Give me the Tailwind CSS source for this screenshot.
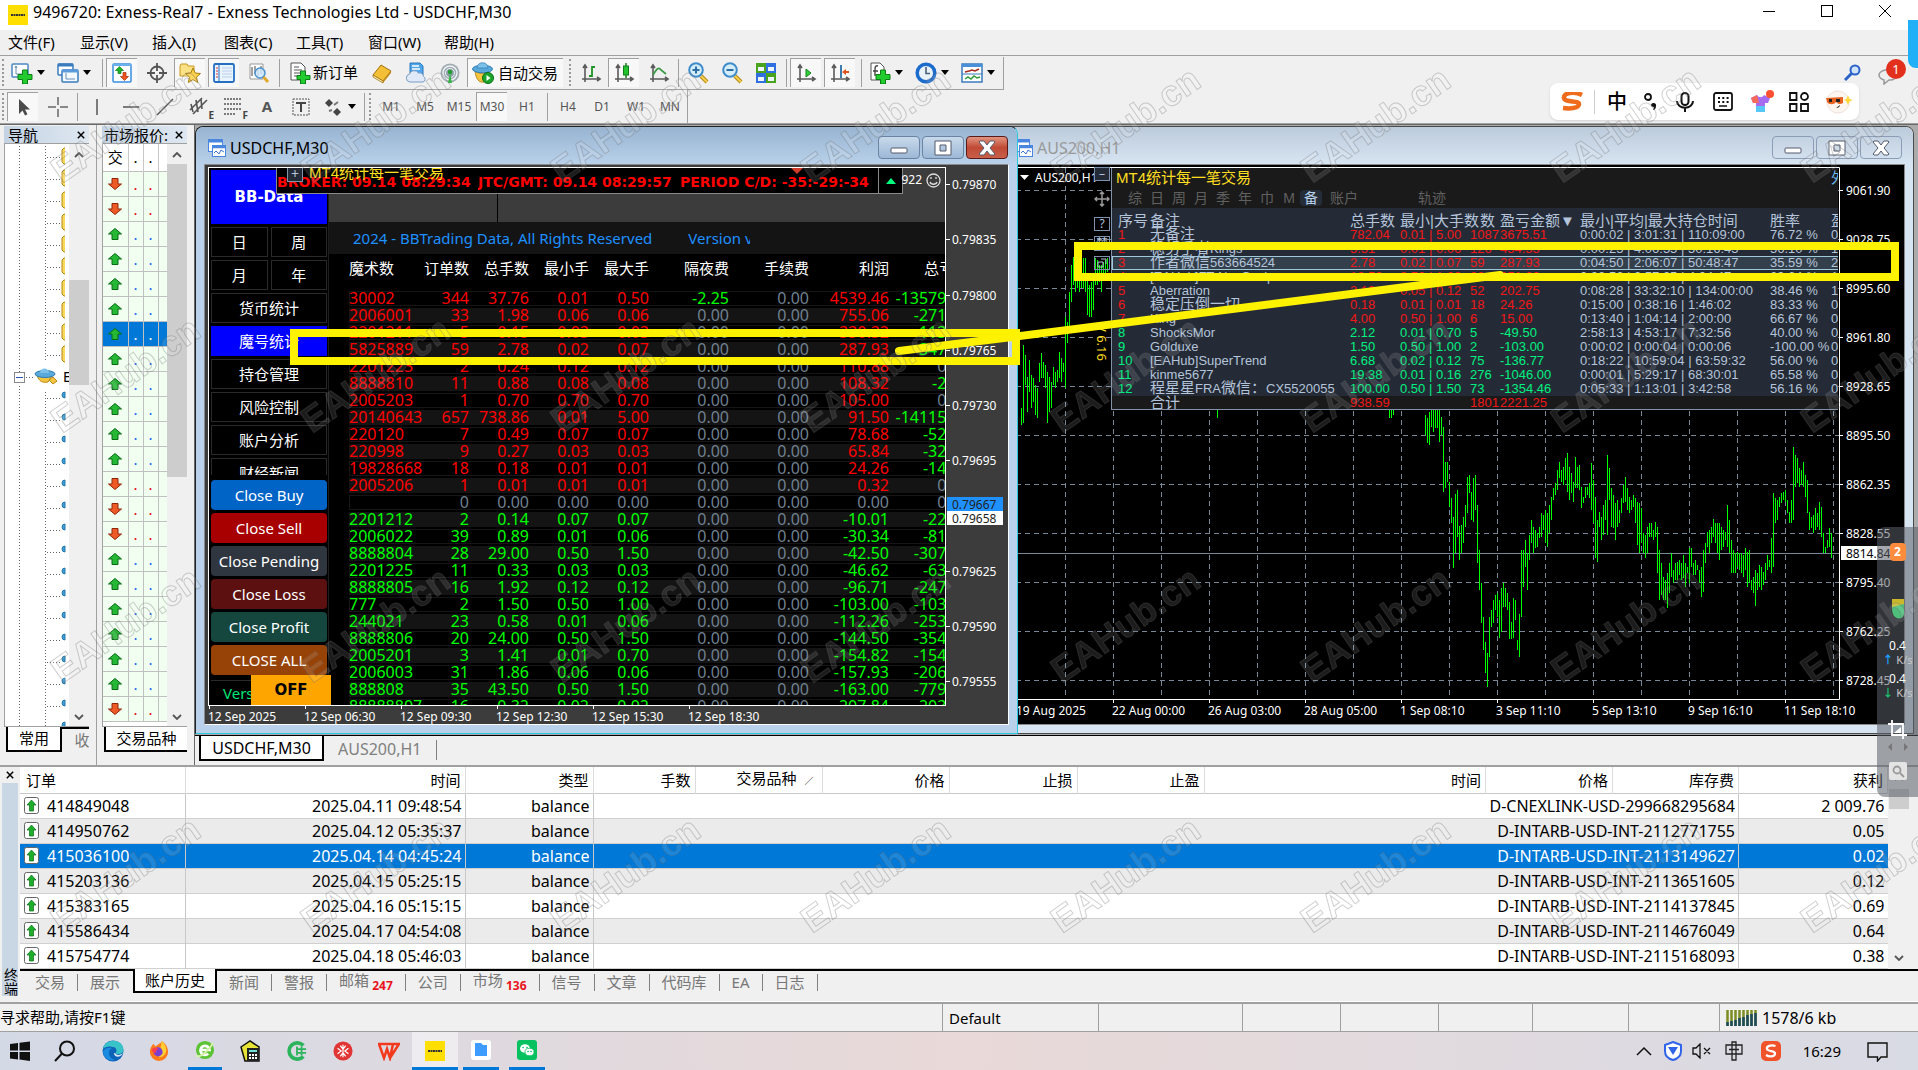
<!DOCTYPE html>
<html lang="zh-CN">
<head>
  <meta charset="UTF-8" />
  <meta name="viewport" content="width=device-width, initial-scale=1.0"/>
  <title>9496720: Exness-Real7 - Exness Technologies Ltd - USDCHF,M30</title>
  <script src="https://cdn.jsdelivr.net/npm/@tailwindcss/browser@4"></script>
</head>
<body class="relative h-screen overflow-hidden flex flex-col bg-[#f0f0f0] text-black text-[15px] font-['Noto_Sans','Noto_Sans_CJK_SC',sans-serif]">

  <!-- Icon sprite -->
  <svg class="hidden" aria-hidden="true">
    <symbol id="caret" viewBox="0 0 8 5"><path d="M0 0h8L4 5z" fill="#000"/></symbol>
    <symbol id="i-newchart" viewBox="0 0 22 22"><rect x="1" y="2" width="16" height="13" rx="1" fill="#fff" stroke="#4b86c2" stroke-width="1.5"/><path d="M5 4v8h9M4 6l1-2 1 2M12 11l2 1-2 1" fill="none" stroke="#6b8fb5"/><path d="M11.500 8h5v4.500H21v5h-4.500V22h-5v-4.500H7v-5h4.500z" fill="#22cc2e" stroke="#0d7d17"/></symbol>
    <symbol id="i-profiles" viewBox="0 0 22 22"><rect x="1" y="2" width="15" height="11" rx="1" fill="#fff" stroke="#3a7bbd" stroke-width="1.500"/><path d="M1 3h15" stroke="#3a7bbd" stroke-width="3"/><rect x="5" y="8" width="16" height="12" rx="1" fill="#f3f9ff" stroke="#3a7bbd" stroke-width="1.500"/><path d="M5 9h16" stroke="#5b9bdb" stroke-width="3"/><path d="M9 11v6h9" fill="none" stroke="#6b8fb5"/></symbol>
    <symbol id="i-market" viewBox="0 0 22 22"><rect x="2" y="2" width="18" height="18" rx="1" fill="#fff" stroke="#3a8de0" stroke-width="1.500"/><path d="M2 3h18" stroke="#6ab1ee" stroke-width="2"/><path d="M8.500 4.500l4 4H10v3H7v-3H4.500z" fill="#1db528" stroke="#0c7a16" stroke-width=".7"/><path d="M13.500 18.500l-4-4H12v-4h3v4h2.500z" fill="#f0551f" stroke="#a62c08" stroke-width=".7"/></symbol>
    <symbol id="i-target" viewBox="0 0 22 22"><circle cx="11" cy="11" r="6.500" fill="none" stroke="#555" stroke-width="1.800"/><path d="M11 1v8M11 13v8M1 11h8M13 11h8" stroke="#555" stroke-width="1.800"/></symbol>
    <symbol id="i-nav" viewBox="0 0 22 22"><path d="M1 4l1-2h6l1 2h6v10H1z" fill="#fbe186" stroke="#c8981d"/><path d="M14 6l2.200 5 5.300.5-4 3.600 1.200 5.400L14 17.600 9.300 20.500l1.200-5.400-4-3.600 5.300-.5z" fill="#fbd04a" stroke="#a97f10"/></symbol>
    <symbol id="i-terminal" viewBox="0 0 22 22"><rect x="1" y="2" width="20" height="18" rx="1.500" fill="#eaf4ff" stroke="#246fc0" stroke-width="1.800"/><path d="M6 3v16" stroke="#246fc0"/><path d="M9 6h10M9 9h10M9 12h10M9 15h10" stroke="#b9cfe6"/><path d="M3 6h2M3 9h2M3 12h2M3 15h2" stroke="#d33"/></symbol>
    <symbol id="i-tester" viewBox="0 0 22 22"><path d="M2 2h13v15H2z" fill="#fff" stroke="#999"/><path d="M4 5v9M7 4v8M10 6v8M13 4v8" stroke="#444"/><circle cx="12" cy="11" r="5" fill="#cfe9fb" fill-opacity=".85" stroke="#4b93cf" stroke-width="1.500"/><path d="M15.500 15l4.500 5" stroke="#e0a92a" stroke-width="3"/></symbol>
    <symbol id="i-order" viewBox="0 0 22 22"><path d="M2 1h10l4 4v13H2z" fill="#fff" stroke="#555"/><path d="M5 5h5M5 8h8M5 11h6M5 14h4" stroke="#555"/><path d="M11.500 9h5v4.500H21v4h-4.500V22h-5v-4.500H8v-4h3.500z" fill="#22cc2e" stroke="#0d7d17"/></symbol>
    <symbol id="i-editor" viewBox="0 0 22 22"><path d="M2 13l8-10 10 6-8 10z" fill="#f2bf37" stroke="#a0720c"/><path d="M2 13l10 6v2L2 15z" fill="#fff3c0" stroke="#a0720c" stroke-width=".8"/><path d="M12 19l8-10v2l-8 10z" fill="#c28a15"/></symbol>
    <symbol id="i-cloud" viewBox="0 0 22 22"><path d="M5 1h10l3 3v9H5z" fill="#4fa6ea" stroke="#2a77bb"/><path d="M7 4h7M7 7h8" stroke="#fff" stroke-width="1.500"/><path d="M5 20a4 4 0 01-.5-7.900 5 5 0 019-1.100 4 4 0 015 3.500A3 3 0 0118 20z" fill="#dfe9f7" stroke="#7d9cc4"/></symbol>
    <symbol id="i-signal" viewBox="0 0 22 22"><circle cx="11" cy="11" r="9.500" fill="#9faab1"/><circle cx="11" cy="11" r="7" fill="none" stroke="#eef3f5" stroke-width="1.500"/><circle cx="11" cy="11" r="4.500" fill="#8da0aa" stroke="#eef3f5"/><circle cx="11" cy="10" r="2.200" fill="#1f9d2c"/><path d="M11 11l2 10h-4z" fill="#35b543"/></symbol>
    <symbol id="i-auto" viewBox="0 0 22 22"><path d="M3 9c1 8 4 12 9 11l5-10c-5 2-10 2-14-1z" fill="#f5c542" stroke="#b98a13"/><ellipse cx="10.500" cy="7" rx="10" ry="3.800" fill="#5aa9dc" stroke="#2e7bb0"/><path d="M5 6c0-7 11-7 11 0z" fill="#7cc1ea" stroke="#2e7bb0" stroke-width=".7"/><circle cx="16" cy="16" r="5.500" fill="#19a52a" stroke="#0c6f18"/><path d="M14.500 13l4 3-4 3z" fill="#fff"/></symbol>
    <symbol id="i-axes" viewBox="0 0 22 22"><path d="M5 3v17M2 17h18M3 6l2-3 2 3M17 15l3 2-3 2" fill="none" stroke="#5a5a5a" stroke-width="1.600"/></symbol>
    <symbol id="i-bars" viewBox="0 0 22 22"><use href="#i-axes"/><path d="M12 4v11M12 5h3M9 14h3" stroke="#1c9426" stroke-width="1.800" fill="none"/></symbol>
    <symbol id="i-candle" viewBox="0 0 22 22"><use href="#i-axes"/><path d="M13 1v15" stroke="#1c7a20" stroke-width="1.500"/><rect x="10.500" y="4" width="5" height="9" fill="#22c32d" stroke="#117d1a"/></symbol>
    <symbol id="i-line" viewBox="0 0 22 22"><use href="#i-axes"/><path d="M5 13c4-7 6-8 8-5l5 4" stroke="#3c9b46" stroke-width="1.800" fill="none"/></symbol>
    <symbol id="i-zoomin" viewBox="0 0 22 22"><path d="M14 14l6 6" stroke="#b98a13" stroke-width="4"/><path d="M14 14l6 6" stroke="#f5d04e" stroke-width="2"/><circle cx="9" cy="8" r="6.800" fill="#d6eefb" stroke="#3f8ccb" stroke-width="2"/><path d="M9 4.500v7M5.500 8h7" stroke="#2b6ea8" stroke-width="2"/></symbol>
    <symbol id="i-zoomout" viewBox="0 0 22 22"><path d="M14 14l6 6" stroke="#b98a13" stroke-width="4"/><path d="M14 14l6 6" stroke="#f5d04e" stroke-width="2"/><circle cx="9" cy="8" r="6.800" fill="#d6eefb" stroke="#3f8ccb" stroke-width="2"/><path d="M5.500 8h7" stroke="#2b6ea8" stroke-width="2"/></symbol>
    <symbol id="i-tile" viewBox="0 0 22 22"><path d="M1 1h10v10H1z" fill="#4aa31c"/><path d="M11 1h10v10H11z" fill="#2f6fe0"/><path d="M1 11h10v10H1z" fill="#2f6fe0"/><path d="M11 11h10v10H11z" fill="#4aa31c"/><path d="M3 5h6v4H3zM13 5h6v4h-6zM3 15h6v4H3zM13 15h6v4h-6z" fill="#eef6ff"/></symbol>
    <symbol id="i-scroll" viewBox="0 0 22 22"><use href="#i-axes"/><path d="M11 7l5 4-5 4z" fill="#2fd03a" stroke="#12851c"/></symbol>
    <symbol id="i-shift" viewBox="0 0 22 22"><use href="#i-axes"/><path d="M12 3v13" stroke="#2a6ea5" stroke-width="1.800"/><path d="M13 10l4-3v2h3v2h-3v2z" fill="#e2521b"/></symbol>
    <symbol id="i-indicator" viewBox="0 0 22 22"><path d="M2 1h9l4 4v13H2z" fill="#fff" stroke="#555"/><path d="M9 4c-3-1-3 2-3 4v6M4 9h5" fill="none" stroke="#444" stroke-width="1.400"/><path d="M11.500 8h5v4.500H21v5h-4.500V22h-5v-4.500H7v-5h4.500z" fill="#22cc2e" stroke="#0d7d17"/></symbol>
    <symbol id="i-clock" viewBox="0 0 22 22"><circle cx="11" cy="11" r="8.800" fill="#e9f2fb" stroke="#1c6ccc" stroke-width="3.500"/><path d="M11 5v6.500h4" fill="none" stroke="#4a6078" stroke-width="1.600"/></symbol>
    <symbol id="i-template" viewBox="0 0 22 22"><rect x="1" y="2" width="20" height="18" fill="#fff" stroke="#3a7bbd" stroke-width="1.500"/><path d="M1 3.500h20" stroke="#4a90d8" stroke-width="3"/><path d="M1 12h20" stroke="#3a7bbd"/><path d="M4 10l4-1 3-1 3 1 4-2" fill="none" stroke="#a52a1a" stroke-width="1.500"/><path d="M4 17l3-2 3 2 3-3 3 2 3-1" fill="none" stroke="#2f9b3a" stroke-width="1.500"/></symbol>
    <symbol id="i-cursor" viewBox="0 0 22 22"><path d="M7 3v15l3.500-3.500 2.500 5 2.500-1.200-2.500-4.800h5z" fill="#4a4a4a"/></symbol>
    <symbol id="i-cross" viewBox="0 0 22 22"><path d="M11 1v8M11 13v8M1 11h8M13 11h8" stroke="#666" stroke-width="1.500"/></symbol>
    <symbol id="i-vline" viewBox="0 0 22 22"><path d="M11 3v16" stroke="#555" stroke-width="1.500"/></symbol>
    <symbol id="i-hline" viewBox="0 0 22 22"><path d="M3 11h16" stroke="#555" stroke-width="1.500"/></symbol>
    <symbol id="i-trend" viewBox="0 0 22 22"><path d="M3 19L19 3" stroke="#555" stroke-width="1.500"/></symbol>
    <symbol id="i-channel" viewBox="0 0 22 22"><path d="M2 14L14 2M5 18L19 4M3 8l2 8M8 4l2 12M13 3l1 10" stroke="#555" stroke-width="1.600"/></symbol>
    <symbol id="i-fibo" viewBox="0 0 22 22"><path d="M2 3h18M2 8h18M2 13h18M2 18h11" stroke="#555" stroke-width="1.400" stroke-dasharray="2 1"/></symbol>
    <symbol id="i-label" viewBox="0 0 22 22"><rect x="3" y="3" width="16" height="16" fill="none" stroke="#555" stroke-dasharray="2 1"/><path d="M6 7h10M11 7v9" stroke="#444" stroke-width="2"/></symbol>
    <symbol id="i-arrows" viewBox="0 0 22 22"><path d="M7 3l4 4-4 4-4-4zM15 12l4 4-4 4-4-4z" fill="#444"/><path d="M7 15l3-1M12 9l4-3" stroke="#777" stroke-width="2"/></symbol>
    <symbol id="i-up" viewBox="0 0 14 12"><path d="M7 .5L13.500 6H10v5.500H4V6H.5z" fill="#25b834" stroke="#0a6b16"/></symbol>
    <symbol id="i-down" viewBox="0 0 14 12"><path d="M7 11.500L13.500 6H10V.5H4V6H.5z" fill="#ee5a26" stroke="#8f2608"/></symbol>
    <symbol id="i-chartwin" viewBox="0 0 18 18"><rect x=".5" y=".5" width="14" height="12" fill="#fff" stroke="#4a86e0"/><path d="M1 2h14" stroke="#4a86e0" stroke-width="3"/><rect x="4.500" y="6.500" width="13" height="11" fill="#fff" stroke="#4a86e0"/><path d="M4 8h14" stroke="#4a86e0" stroke-width="2.500"/><path d="M6 14l2-2 3 3 2-4 3 2" fill="none" stroke="#3575d8"/></symbol>
    <symbol id="i-min" viewBox="0 0 18 18"><rect x="1" y="9" width="16" height="5" rx="1" fill="#fff" stroke="#555b6b"/></symbol>
    <symbol id="i-max" viewBox="0 0 18 18"><path fill-rule="evenodd" d="M1 2h16v14H1zM6 6v6h6V6z" fill="#fff" stroke="#555b6b"/></symbol>
    <symbol id="i-x" viewBox="0 0 18 18"><path d="M2 2h4l3 4 3-4h4l1 1-5 6 5 6-1 1h-4l-3-4-3 4H2l-1-1 5-6-5-6z" fill="#fff" stroke="#555b6b"/></symbol>
    <symbol id="i-close" viewBox="0 0 10 10"><path d="M1 1l8 8M9 1L1 9" stroke="#000" stroke-width="1.800"/></symbol>
    <symbol id="i-chev-up" viewBox="0 0 10 6"><path d="M1 5l4-4 4 4" fill="none" stroke="#555" stroke-width="1.800"/></symbol>
    <symbol id="i-chev-down" viewBox="0 0 10 6"><path d="M1 1l4 4 4-4" fill="none" stroke="#555" stroke-width="1.800"/></symbol>
  </svg>

  <!-- Title bar -->
  <header class="h-[30px] shrink-0 bg-white flex items-center pl-2 pr-[27px]">
    <svg class="w-5 h-5" viewBox="0 0 20 20"><rect width="20" height="20" fill="#ffde02"/><path d="M3 10h14" stroke="#333" stroke-width="2" stroke-dasharray="2 .5"/></svg>
    <h1 class="ml-[5px] -mt-1.5 text-[16px]">9496720: Exness-Real7 - Exness Technologies Ltd - USDCHF,M30</h1>
    <div class="ml-auto flex -mt-2 gap-[46px]">
      <button aria-label="最小化"><svg class="w-3 h-3" viewBox="0 0 12 12"><path d="M0 6.500h12" stroke="#000"/></svg></button>
      <button aria-label="最大化"><svg class="w-3 h-3" viewBox="0 0 12 12"><rect x=".5" y=".5" width="11" height="11" fill="none" stroke="#000"/></svg></button>
      <button aria-label="关闭"><svg class="w-3 h-3" viewBox="0 0 12 12"><path d="M0 0l12 12M12 0L0 12" stroke="#000"/></svg></button>
    </div>
  </header>

  <!-- Menu -->
  <nav id="menu" class="h-[26px] shrink-0 flex items-center gap-[23px] pl-2 border-b border-[#a0a0a0]"></nav>

  <!-- Toolbars -->
  <div class="h-[34px] shrink-0 flex items-center">
    <div id="toolbar1" class="h-[33px] flex items-center border-r border-b border-[#a0a0a0]"></div>
    <div class="ml-auto mr-3 flex items-center gap-4">
      <button aria-label="搜索"><svg class="w-[18px] h-[18px]" viewBox="0 0 18 18"><circle cx="11" cy="6" r="4.500" fill="#cfe3fb" stroke="#2a62c8" stroke-width="2"/><path d="M7.500 9.500L1 16" stroke="#2a62c8" stroke-width="3"/></svg></button>
      <button class="relative w-7 h-6" aria-label="消息">
        <svg class="w-5 h-4 mt-2" viewBox="0 0 20 16"><path d="M8 1h4c4 0 6 2 6 5s-2 5-6 5h-1l-5 4v-4c-3-1-5-3-5-5s3-5 7-5z" fill="#eee" stroke="#999" stroke-width="1.500"/></svg>
        <span class="absolute -top-0.5 right-0 w-5 h-5 rounded-full bg-[#e2301c] text-white text-[13px] leading-5">1</span>
      </button>
    </div>
  </div>
  <div class="h-[34px] shrink-0 border-b border-[#a0a0a0]">
    <div id="toolbar2" class="h-[33px] w-fit flex items-center border-r border-[#a0a0a0]"></div>
  </div>

  <!-- Main area -->
  <main class="flex-1 min-h-0 flex border-t border-[#696969]">
    <!-- Navigator -->
    <section class="w-[97px] shrink-0 pl-1 pr-[7px] pt-px flex flex-col border-r border-[#a0a0a0]">
      <div class="h-[17px] flex items-center justify-between pl-1 pr-1 bg-gradient-to-r from-[#c3d3e3] to-[#dfe8f1] leading-4">
        <h2>导航</h2><button aria-label="关闭导航"><svg class="w-2 h-2"><use href="#i-close"/></svg></button>
      </div>
      <div class="flex-1 min-h-0 flex border border-[#a0a0a0] border-r-0 bg-white">
        <svg id="navTree" class="flex-1 h-full overflow-hidden"></svg>
        <div class="w-5 bg-[#f0f0f0] flex flex-col items-center justify-between pt-2 pb-1.5">
          <svg class="w-2.5 h-1.5"><use href="#i-chev-up"/></svg>
          <div class="w-5 h-[105px] bg-[#cdcdcd] -mt-[208px]"></div>
          <svg class="w-2.5 h-1.5"><use href="#i-chev-down"/></svg>
        </div>
      </div>
      <div class="h-[38px] flex pl-0.5 overflow-hidden">
        <button class="h-[25px] w-14 shrink-0 bg-white border-x-2 border-b-2 border-black">常用</button>
        <button class="h-[25px] w-7 shrink-0 border-t-2 border-black text-[#777] pl-3">收</button>
      </div>
    </section>
    <!-- Market watch -->
    <section class="w-[97px] shrink-0 pl-[5px] pr-[7px] pt-px flex flex-col">
      <div class="h-[17px] flex items-center justify-between pl-0.5 pr-1 bg-gradient-to-r from-[#c3d3e3] to-[#dfe8f1] leading-4 whitespace-nowrap">
        <h2>市场报价:</h2><button aria-label="关闭市场报价"><svg class="w-2 h-2"><use href="#i-close"/></svg></button>
      </div>
      <div class="flex-1 min-h-0 flex border border-[#a0a0a0] border-r-0 bg-white overflow-hidden">
        <div class="flex-1 overflow-hidden">
          <table class="w-full table-fixed border-collapse leading-4">
            <colgroup><col class="w-[25px]"><col class="w-[15px]"><col class="w-[15px]"><col></colgroup>
            <thead><tr class="h-[27px]"><th class="p-0 font-normal">交</th><th class="p-0 border-l border-[#c8c8c8] font-normal">.</th><th class="p-0 border-l border-[#c8c8c8] font-normal">.</th><th class="p-0 border-l border-[#c8c8c8]"></th></tr></thead>
            <tbody id="quotes"></tbody>
          </table>
        </div>
        <div class="w-5 bg-[#f0f0f0] flex flex-col items-center pt-2 pb-1.5">
          <svg class="w-2.5 h-1.5"><use href="#i-chev-up"/></svg>
          <div class="w-5 h-[313px] bg-[#cdcdcd] mt-1.5 mb-auto"></div>
          <svg class="w-2.5 h-1.5"><use href="#i-chev-down"/></svg>
        </div>
      </div>
      <div class="h-[38px] flex pl-0.5">
        <button class="h-[25px] flex-1 bg-white border-l-2 border-b-2 border-black">交易品种</button>
      </div>
    </section>

    <!-- Chart desktop -->
    <div class="flex-1 min-w-0 flex flex-col border-l border-[#696969]">
      <div class="relative flex-1 min-h-0 bg-[#ababab] overflow-hidden">

        <!-- AUS200 window -->
        <section class="absolute left-[807px] right-1 top-px bottom-px flex flex-col rounded-t-lg border border-[#4a4a4a] bg-[#d7e4f2]">
          <div class="h-[37px] flex items-center pt-1 pl-3 pr-[11px] rounded-t-lg bg-gradient-to-b from-[#bccbdb] to-[#d7e4f2]">
            <svg class="w-[18px] h-[18px]"><use href="#i-chartwin"/></svg>
            <h2 class="ml-1 text-[16px] text-[#999]">AUS200,H1</h2>
            <div class="ml-auto flex gap-[2px]">
              <button class="w-[42px] h-[23px] rounded-sm border border-[#8c9db8] flex items-center justify-center" aria-label="最小化"><svg class="w-[18px] h-[18px]"><use href="#i-min"/></svg></button>
              <button class="w-[42px] h-[23px] rounded-sm border border-[#8c9db8] flex items-center justify-center" aria-label="最大化"><svg class="w-[18px] h-[18px]"><use href="#i-max"/></svg></button>
              <button class="w-[42px] h-[23px] rounded-sm border border-[#8c9db8] flex items-center justify-center" aria-label="关闭"><svg class="w-[18px] h-[18px]"><use href="#i-x"/></svg></button>
            </div>
          </div>
          <div class="relative flex-1 min-h-0 mx-2 mb-2 border border-[#8a8a8a] bg-black overflow-hidden">
            <svg id="ausChart" class="w-[893px] h-[557px] text-[12px]" viewBox="1011 165 893 557"></svg>

            <!-- Statistics panel over the chart -->
            <div class="absolute left-[99px] right-[66px] top-[3px] h-[242px] border-l border-b border-[#8193ab] bg-[#1a1a1a] overflow-hidden font-['Liberation_Sans','Noto_Sans_CJK_SC',sans-serif] text-[13px] text-[#b4c4da]">
              <div class="h-5 flex items-center justify-between pl-1 text-[15px] text-yellow-300"><h3>MT4统计每一笔交易</h3><span class="-mr-2 text-[#6ab7e8]">外</span></div>
              <div class="h-5 flex items-center pl-3 text-[14px] text-[#606060]">
                <button class="w-[22px]">综</button><button class="w-[22px]">日</button><button class="w-[22px]">周</button><button class="w-[22px]">月</button><button class="w-[22px]">季</button><button class="w-[22px]">年</button><button class="w-[22px]">巾</button><button class="w-[22px]">M</button><button class="w-[22px] rounded-sm bg-[#252d38] text-[#b8d0ea] leading-4">备</button><button class="w-11">账户</button><button class="w-11 ml-11">轨迹</button>
              </div>
              <table class="w-[760px] table-fixed bg-[#252b36] whitespace-nowrap leading-[14px]">
                <colgroup><col class="w-[38px]"><col class="w-[200px]"><col class="w-[50px]"><col class="w-[70px]"><col class="w-[30px]"><col class="w-[80px]"><col class="w-[190px]"><col class="w-[61px]"><col></colgroup>
                <thead><tr class="h-5 text-left text-[15px] align-bottom"><th class="p-0 pl-1.5 font-normal">序号</th><th class="p-0 font-normal">备注</th><th class="p-0 font-normal">总手数</th><th class="p-0 font-normal">最小|大手数</th><th class="p-0 pl-2.5 font-normal">数</th><th class="p-0 font-normal">盈亏金额▼</th><th class="p-0 font-normal">最小|平均|最大持仓时间</th><th class="p-0 font-normal">胜率</th><th class="p-0 font-normal">盈</th></tr></thead>
                <tbody id="stats"></tbody>
                <tfoot><tr class="h-[14px] bg-[#1a1a1a] text-[#f01818]"><td></td><td class="text-[15px] text-[#b4c4da]">合计</td><td>938.59</td><td></td><td>1801</td><td>2221.25</td><td></td><td></td><td></td></tr></tfoot>
              </table>
            </div>

            <!-- Panel side buttons -->
            <div class="absolute left-[82px] top-0.5 w-4 flex flex-col items-center text-[#b4c4da] text-[12px] leading-3">
              <button class="w-4 h-[14px] border border-[#7b92ad] bg-[#252b36]">–</button>
              <svg class="w-4 h-4 my-2.5" viewBox="0 0 16 16"><path d="M8 1v14M1 8h14M6 3l2-2 2 2M6 13l2 2 2-2M3 6L1 8l2 2M13 6l2 2-2 2" fill="none" stroke="#999" stroke-width="1.500"/></svg>
              <button class="w-4 h-[14px] border border-[#7b92ad]">?</button>
              <button class="w-4 h-[15px] mt-[5px] border border-[#7b92ad]">禁</button>
              <button class="w-4 h-[14px] mt-[5px] border border-[#7b92ad] flex items-center justify-center" aria-label="还原"><svg class="w-2.5 h-2.5" viewBox="0 0 10 10"><path d="M4 1h5v5M1 4h5v5H1z" fill="none" stroke="#b4c4da"/></svg></button>
              <span class="mt-[54px] [writing-mode:vertical-rl] text-[13px] text-yellow-300">V 6.16</span>
            </div>
          </div>
        </section>

        <!-- USDCHF window -->
        <section class="absolute left-0 top-px bottom-px w-[823px] flex flex-col rounded-t-lg border border-[#222] border-b-[#2cc5dc] border-r-[#2cc5dc] bg-[#b9d1ea]">
          <div class="h-[37px] shrink-0 flex items-center pt-1 pl-3 pr-[9px] rounded-t-lg bg-gradient-to-b from-[#98b4d1] to-[#b9d1ea]">
            <svg class="w-[18px] h-[18px]"><use href="#i-chartwin"/></svg>
            <h2 class="ml-1 text-[16px]">USDCHF,M30</h2>
            <div class="ml-auto flex gap-[2px]">
              <button class="w-[42px] h-[23px] rounded-sm border border-[#6b84a4] bg-gradient-to-b from-[#c8d9eb] to-[#9db8d6] flex items-center justify-center" aria-label="最小化"><svg class="w-[18px] h-[18px]"><use href="#i-min"/></svg></button>
              <button class="w-[42px] h-[23px] rounded-sm border border-[#6b84a4] bg-gradient-to-b from-[#c8d9eb] to-[#9db8d6] flex items-center justify-center" aria-label="最大化"><svg class="w-[18px] h-[18px]"><use href="#i-max"/></svg></button>
              <button class="w-[42px] h-[23px] rounded-sm border border-[#5a1a1a] bg-gradient-to-b from-[#e0937f] via-[#c04a35] to-[#c9604a] flex items-center justify-center" aria-label="关闭"><svg class="w-[18px] h-[18px]"><use href="#i-x"/></svg></button>
            </div>
          </div>
          <div class="flex-1 min-h-0 mx-2 mb-2 pt-0.5 pl-[3px] border border-[#8a8a8a] border-r-white border-b-white bg-[#3c3c3c] flex flex-col">
            <div class="flex-1 min-h-0 flex">
              <div class="relative flex-1 min-w-0 border border-white bg-black flex overflow-hidden">

                <!-- Side menu -->
                <div class="w-[120px] shrink-0 pl-0.5 pt-0.5 flex flex-col border-r border-[#1e1e1e] text-white text-[15px]">
                  <div class="h-[305px] shrink-0 w-[116px] overflow-hidden flex flex-col gap-[3px]">
                    <div class="h-[54px] shrink-0 bg-[#0000ff] flex items-center justify-center font-bold text-[15px] font-['DejaVu_Sans',sans-serif]">BB-Data</div>
                    <div class="grid grid-cols-2 gap-[3px] shrink-0">
                      <button class="h-[30px] border border-[#2a2a2a]">日</button>
                      <button class="h-[30px] border border-[#2a2a2a]">周</button>
                      <button class="h-[30px] border border-[#2a2a2a]">月</button>
                      <button class="h-[30px] border border-[#2a2a2a]">年</button>
                    </div>
                    <button class="h-[30px] shrink-0 border border-[#2a2a2a]">货币统计</button>
                    <button class="h-[30px] shrink-0 bg-[#0000ff]">魔号统计</button>
                    <button class="h-[30px] shrink-0 border border-[#2a2a2a]">持仓管理</button>
                    <button class="h-[30px] shrink-0 border border-[#2a2a2a]">风险控制</button>
                    <button class="h-[30px] shrink-0 border border-[#2a2a2a]">账户分析</button>
                    <button class="h-[30px] shrink-0 border border-[#2a2a2a]">财经新闻</button>
                  </div>
                  <div class="mt-[5px] w-[116px] flex flex-col gap-[3px]">
                    <button class="h-[30px] rounded-sm bg-[#0063c6]">Close Buy</button>
                    <button class="h-[30px] rounded-sm bg-[#a80000]">Close Sell</button>
                    <button class="h-[30px] rounded-sm bg-[#2f3640]">Close Pending</button>
                    <button class="h-[30px] rounded-sm bg-[#5c1010]">Close Loss</button>
                    <button class="h-[30px] rounded-sm bg-[#15473f]">Close Profit</button>
                    <button class="h-[30px] rounded-sm bg-[#974308]">CLOSE ALL</button>
                  </div>
                  <span class="mt-[5px] pl-3 h-[25px] leading-[25px] border-t border-[#2a2a2a] text-[#00e676]">Version</span>
                </div>
                <button class="absolute left-[42px] bottom-0 w-20 h-[30px] bg-[#ffa500] font-bold text-black text-[15px] font-['DejaVu_Sans',sans-serif]">OFF</button>

                <!-- Magic number statistics -->
                <div class="flex-1 min-w-0 flex flex-col overflow-hidden">
                  <div class="h-[54px] shrink-0 bg-[#3c3c3c] pl-[168px]"><div class="h-full border-l border-black"></div></div>
                  <p class="h-8 shrink-0 leading-8 bg-[#141414] pl-6 text-[#1e90ff] whitespace-nowrap">2024 - BBTrading Data, All Rights Reserved<span class="ml-9 inline-block w-[62px] overflow-hidden align-bottom">Version v1.0</span></p>
                  <table class="ml-5 w-[620px] shrink-0 table-fixed border-separate border-spacing-x-0 border-spacing-y-[2px] whitespace-nowrap text-right text-[16px] leading-[15px]">
                    <colgroup><col class="w-[75px]"><col class="w-[45px]"><col class="w-[60px]"><col class="w-[60px]"><col class="w-[60px]"><col class="w-20"><col class="w-20"><col class="w-20"><col class="w-20"></colgroup>
                    <thead><tr class="h-[33px] text-[15px] text-white align-top leading-6"><th class="p-0 font-normal text-left">魔术数</th><th class="p-0 font-normal">订单数</th><th class="p-0 font-normal">总手数</th><th class="p-0 font-normal">最小手</th><th class="p-0 font-normal">最大手</th><th class="p-0 font-normal">隔夜费</th><th class="p-0 font-normal">手续费</th><th class="p-0 font-normal">利润</th><th class="p-0 font-normal">总亏损</th></tr></thead>
                    <tbody id="magic"></tbody>
                  </table>
                </div>

                <!-- Clock ticker -->
                <div class="absolute left-[67px] right-[42px] top-0 h-[26px] flex border border-t-0 border-[#8a8a8a] bg-black text-[#ff0000] font-bold text-[14px] leading-7 whitespace-nowrap font-['DejaVu_Sans',sans-serif]">
                  <span class="w-[201px] overflow-hidden">BROKER: 09.14 08:29:34</span>
                  <span class="w-[202px] overflow-hidden">JTC/GMT: 09.14 08:29:57</span>
                  <span class="flex-1">PERIOD C/D: -35:-29:-34</span>
                  <button class="w-6 border-l border-[#8a8a8a] flex items-center justify-center" aria-label="收起"><svg class="w-2.5 h-1.5" viewBox="0 0 10 6"><path d="M0 6l5-6 5 6z" fill="#00ff7f"/></svg></button>
                </div>
                <svg class="absolute left-[582px] top-0 w-3 h-1.5" viewBox="0 0 12 6"><path d="M0 0h12L6 6z" fill="#d03a2a"/></svg>
                <button class="absolute left-[78px] -top-0.5 w-4 h-4 border border-[#8193ab] bg-[#252b36] text-[#b4c4da] text-[14px] leading-3">+</button>
                <h3 class="absolute left-[100px] -top-1.5 text-[15px] text-yellow-300 font-['Liberation_Sans','Noto_Sans_CJK_SC',sans-serif]">MT4统计每一笔交易</h3>
                <div class="absolute right-1 top-1 flex items-center gap-1 text-white text-[12px] leading-4">
                  922<svg class="w-[15px] h-[15px]" viewBox="0 0 15 15"><circle cx="7.500" cy="7.500" r="6.500" fill="none" stroke="#ddd" stroke-width="1.300"/><path d="M4 9c1 3 6 3 7 0M5 4v2M10 4v2" fill="none" stroke="#ddd" stroke-width="1.300"/></svg>
                </div>
              </div>
              <svg id="usdPrices" class="w-[62px] shrink-0 text-[12px] overflow-visible"></svg>
            </div>
            <svg id="usdTimes" class="h-[18px] shrink-0 w-full text-[12px]"></svg>
          </div>
        </section>
      </div>

      <!-- Chart tabs -->
      <div class="h-[30px] shrink-0 flex border-t border-black pl-1 text-[16px]">
        <button class="h-[25px] w-[125px] bg-white border-x-2 border-b-2 border-black">USDCHF,M30</button>
        <button class="h-[25px] px-3.5 text-[#808080]">AUS200,H1</button>
        <span class="h-5 mt-1 ml-px border-l border-[#808080]"></span>
      </div>
    </div>
  </main>

  <!-- Terminal -->
  <section class="h-[237px] shrink-0 flex border-t-2 border-[#a0a0a0]">
    <div class="w-5 shrink-0 pt-1 pb-1.5 flex flex-col items-center gap-1">
      <button aria-label="关闭终端"><svg class="w-2 h-2"><use href="#i-close"/></svg></button>
      <h2 class="flex-1 w-4 text-[14px] leading-4 [writing-mode:vertical-rl] text-right bg-[#c9d6e4]">终端</h2>
    </div>
    <div class="flex-1 min-w-0 flex flex-col">
      <div class="h-[204px] shrink-0 flex border-b-2 border-black">
        <div class="flex-1 bg-white overflow-hidden">
          <table class="w-full table-fixed border-collapse whitespace-nowrap text-right text-[16px] leading-5">
            <colgroup><col class="w-[165px]"><col class="w-[280px]"><col class="w-32"><col class="w-[102px]"><col class="w-[127px]"><col class="w-[127px]"><col class="w-32"><col class="w-[127px]"><col><col class="w-[127px]"><col class="w-[126px]"><col class="w-[149px]"></colgroup>
            <thead><tr class="h-[26px] border-b border-[#c8c8c8] text-[15px] [&>th]:font-normal [&>th]:py-0 [&>th]:pr-1 [&>th]:border-r [&>th]:border-[#dcdcdc]"><th class="text-left pl-1.5">订单</th><th>时间</th><th>类型</th><th>手数</th><th>交易品种 <span class="text-[9px] px-1">∕</span></th><th>价格</th><th>止损</th><th>止盈</th><th>时间</th><th>价格</th><th>库存费</th><th>获利</th></tr></thead>
            <tbody id="history"></tbody>
          </table>
        </div>
        <div class="w-[22px] mr-2 flex flex-col items-center py-2">
          <svg class="w-2.5 h-1.5"><use href="#i-chev-up"/></svg>
          <div class="w-5 h-5 bg-[#cdcdcd] mb-auto mt-2"></div>
          <svg class="w-2.5 h-1.5"><use href="#i-chev-down"/></svg>
        </div>
      </div>
      <div id="termTabs" class="h-[31px] flex pl-[3px] text-[#777] border-b border-white"></div>
    </div>
  </section>

  <!-- Status bar -->
  <footer class="h-[30px] shrink-0 flex items-center border-t-2 border-b border-[#a0a0a0]">
    <span class="flex-1">寻求帮助,请按F1键</span>
    <span class="w-[156px] h-full leading-7 pl-1.5 border-l border-[#a0a0a0]">Default</span>
    <span class="w-36 h-full border-l border-[#a0a0a0]"></span>
    <span class="w-[98px] h-full border-l border-[#a0a0a0]"></span>
    <span class="w-[98px] h-full border-l border-[#a0a0a0]"></span>
    <span class="w-[94px] h-full border-l border-[#a0a0a0]"></span>
    <span class="w-24 h-full border-l border-[#a0a0a0]"></span>
    <span class="w-[91px] h-full border-l border-[#a0a0a0]"></span>
    <span class="w-[199px] h-full border-l border-[#a0a0a0] flex items-center gap-1 pl-1.5">
      <svg class="w-8 h-4" viewBox="0 0 32 16"><path d="M1.500 0v16M5.500 0v16M9.500 0v16M13.500 0v16M17.500 0v16M21.500 0v16M25.500 0v16M29.500 0v16" stroke="#7a8c22" stroke-width="2.500"/><path d="M1.500 12v4M5.500 11v5M9.500 10v6M13.500 8v8M17.500 7v9M21.500 5v11M25.500 4v12M29.500 3v13" stroke="#1c4a5e" stroke-width="2.500"/></svg>
      <span class="text-[16px]">1578/6 kb</span>
    </span>
  </footer>

  <!-- Windows taskbar -->
  <footer class="h-[38px] shrink-0 flex items-stretch bg-gradient-to-r from-[#d4d9e6] via-[#e9d9d8] to-[#d8dae4]">
    <button class="w-10 flex items-center justify-center" aria-label="开始"><svg class="w-[22px] h-[22px]" viewBox="0 0 22 22"><path d="M1 4l8-1v7.500H1zM10.500 2.800L21 1.500v9H10.500zM1 12h8v7.500l-8-1zM10.500 12H21v9l-10.500-1.500z" fill="#111"/></svg></button>
    <button class="w-[50px] flex items-center justify-center" aria-label="搜索"><svg class="w-[22px] h-[22px]" viewBox="0 0 22 22"><circle cx="13" cy="8.500" r="7" fill="none" stroke="#111" stroke-width="2"/><path d="M8 13.500l-7 7.500" stroke="#111" stroke-width="2"/></svg></button>
    <button class="w-[46px] flex items-center justify-center" aria-label="Edge"><svg class="w-[22px] h-[22px]" viewBox="0 0 22 22"><circle cx="11" cy="11" r="10.500" fill="#0c63b8"/><path d="M1 9C3-2 21-2 21.500 10c0 4-6 5-8 3 2-2 1-6-3-6-4-1-8 0-9.500 2z" fill="#38c3c9"/><path d="M10 8c-5 3-4 10 3 12-6 2-12-3-12-9 2-3 6-4 9-3z" fill="#1b8be0"/><path d="M13 13c2 3 6 2 8 0-2 5-9 5-9 0z" fill="#d8e6f3"/></svg></button>
    <button class="w-[46px] flex items-center justify-center" aria-label="Firefox"><svg class="w-[20px] h-[20px]" viewBox="0 0 22 22"><path d="M11 3c3-1 3-2 3-3 3 2 7 6 7 12a10 10 0 01-20 0c0-4 2-7 4-9l2 3z" fill="#ff7a1a"/><path d="M14 0c3 3 5 6 5 10 0 5-4 8-8 8" fill="#ffcf33"/><circle cx="10" cy="12" r="5" fill="#7a3fd0"/><path d="M3 9c3-3 6-1 8 0-3 0-4 2-3 4-3 0-5-1-5-4z" fill="#ff3f4f"/></svg></button>
    <button class="w-[46px] px-1.5 flex items-center justify-center" aria-label="360浏览器"><span class="w-full h-full flex items-center justify-center border-b-[3px] border-[#0078d7]"><svg class="w-[20px] h-[20px]" viewBox="0 0 22 22"><circle cx="11" cy="11" r="10" fill="#5cc334"/><path d="M6 11h10a5 5 0 10-1.500 4" fill="none" stroke="#fff" stroke-width="3"/><path d="M1 17C6 21 17 9 20 3" fill="none" stroke="#d5f2a8" stroke-width="2"/></svg></span></button>
    <button class="w-[46px] flex items-center justify-center" aria-label="计算器"><svg class="w-[22px] h-[22px]" viewBox="0 0 22 22"><path d="M1 7l9-6 9 6v14H5z" fill="#e8e337" stroke="#111" stroke-width="1.500"/><rect x="7" y="8" width="12" height="13" fill="#222"/><path d="M9 11h8" stroke="#6fe0d8" stroke-width="2"/><path d="M9 15h8M9 18h8" stroke="#fff" stroke-width="2" stroke-dasharray="2 1"/></svg></button>
    <button class="w-[46px] flex items-center justify-center" aria-label="加速器"><svg class="w-[20px] h-[20px]" viewBox="0 0 22 22"><path d="M18 5a9 9 0 100 12" fill="none" stroke="#2cb45c" stroke-width="4"/><path d="M11 6v10M11 9h5M11 13h5M16 6v10M16 9h5M16 13h5" stroke="#2cb45c" stroke-width="2"/></svg></button>
    <button class="w-[46px] flex items-center justify-center" aria-label="行情"><svg class="w-[20px] h-[20px]" viewBox="0 0 22 22"><circle cx="11" cy="11" r="10.500" fill="#e13434"/><path d="M11 4v14M5 8l4 3-4 3M17 8l-4 3 4 3M8 5l3 4 3-4M8 17l3-4 3 4" fill="none" stroke="#fff" stroke-width="1.300"/></svg></button>
    <button class="w-[46px] flex items-center justify-center" aria-label="WPS"><svg class="w-[22px] h-[20px]" viewBox="0 0 22 20"><path d="M1 3h14l-3 14-3-9-3 9zM12 17l9-14h-5" fill="none" stroke="#f2391d" stroke-width="2.500"/></svg></button>
    <button class="w-[46px] flex items-center justify-center border-b-[3px] border-[#0078d7] bg-white/50" aria-label="Exness"><svg class="w-5 h-5 mt-0.5" viewBox="0 0 20 20"><rect width="20" height="20" fill="#ffde02"/><path d="M3 10h14" stroke="#333" stroke-width="2" stroke-dasharray="2 .5"/></svg></button>
    <button class="w-[36px] mx-[5px] flex items-center justify-center border-b-[3px] border-[#0078d7]" aria-label="文件"><svg class="w-5 h-5" viewBox="0 0 20 20"><rect width="20" height="20" rx="3" fill="#fff"/><path d="M4 3h6l2 2h4v11H4z" fill="#3f9bff"/></svg></button>
    <button class="w-[36px] mx-[5px] flex items-center justify-center border-b-[3px] border-[#0078d7]" aria-label="微信"><svg class="w-5 h-5" viewBox="0 0 20 20"><rect width="20" height="20" rx="3" fill="#07c160"/><ellipse cx="8" cy="8.500" rx="5" ry="4.300" fill="#fff"/><ellipse cx="12.500" cy="12" rx="4.500" ry="3.700" fill="#fff" stroke="#07c160" stroke-width=".8"/><path d="M6 7.500h.1M10 7.500h.1M11 11.500h.1M14 11.500h.1" stroke="#07c160" stroke-width="1.600" stroke-linecap="round"/></svg></button>
    <div class="ml-auto flex items-center pr-[30px]">
      <svg class="w-4 h-2.5 mr-3" viewBox="0 0 16 10"><path d="M1 9l7-7 7 7" fill="none" stroke="#111" stroke-width="1.500"/></svg>
      <svg class="w-[18px] h-5 mr-2.5" viewBox="0 0 18 20"><path d="M9 1l8 3v6c0 5-4 8-8 9-4-1-8-4-8-9V4z" fill="#fff" stroke="#2f63e8" stroke-width="2"/><path d="M4 6h10l-5 8z" fill="#2f63e8"/></svg>
      <svg class="w-5 h-4 mr-3" viewBox="0 0 20 16"><path d="M1 5h3l4-4v14l-4-4H1zM12 5l6 6M18 5l-6 6" fill="none" stroke="#111" stroke-width="1.300"/></svg>
      <svg class="w-5 h-5 mr-[17px]" viewBox="0 0 20 20"><path d="M2 4h16v9H2zM8 1h4v18H8zM5 8.500h10" fill="none" stroke="#222" stroke-width="1.300"/></svg>
      <svg class="w-5 h-5 mr-[22px]" viewBox="0 0 20 20"><rect width="20" height="20" rx="5" fill="#f0532a"/><path d="M14.500 5C10 3.500 5 5 6 8s8 1 8 4.500-6 3.500-9 1.500" fill="none" stroke="#fff" stroke-width="2.300"/></svg>
      <time class="mr-[26px]">16:29</time>
      <svg class="w-[21px] h-[21px]" viewBox="0 0 21 21"><path d="M1 2h19v14h-6l-3.500 4V16H1z" fill="none" stroke="#111" stroke-width="1.400"/></svg>
    </div>
  </footer>

  <!-- Highlight marks -->
  <svg class="absolute inset-0 w-full h-full pointer-events-none" fill="none" stroke="#fff200" stroke-width="8">
    <rect x="294" y="333" width="722" height="28"/>
    <rect x="1078" y="246" width="817" height="31"/>
    <path d="M899 351L1012 337L1500 275" stroke-linecap="round"/>
  </svg>

  <!-- Input method bar -->
  <div class="absolute right-[59px] top-[83px] w-[309px] h-[37px] rounded-lg bg-white shadow flex items-center pl-[11px]">
    <svg class="w-[23px] h-5" viewBox="0 0 23 20"><path d="M21 3C13-1 2 1 3 6s15 2 15 6-8 5-16 4" fill="none" stroke="#ee6c1c" stroke-width="4.500"/></svg>
    <span class="ml-[10px] w-px h-6 bg-[#ccc]"></span>
    <button class="ml-3 text-[20px] leading-6 font-medium">中</button>
    <svg class="w-4 h-5 ml-4" viewBox="0 0 16 20"><circle cx="5" cy="5" r="3" fill="none" stroke="#111" stroke-width="1.800"/><path d="M8 13a2.500 2.500 0 115 1c0 3-2 4-3 4l1-3c-2 0-3-1-3-2z" fill="#111"/></svg>
    <svg class="w-5 h-5 ml-4" viewBox="0 0 20 20"><rect x="6.500" y="1" width="7" height="12" rx="3.500" fill="none" stroke="#111" stroke-width="2"/><path d="M2 9c0 9 16 9 16 0M10 16v4" fill="none" stroke="#111" stroke-width="2"/></svg>
    <svg class="w-5 h-5 ml-[18px]" viewBox="0 0 20 20"><rect x="1" y="1" width="18" height="17" rx="2" fill="none" stroke="#111" stroke-width="1.800"/><path d="M5 6h11M5 10h11" stroke="#111" stroke-width="1.800" stroke-dasharray="2 2.300"/><path d="M6 14h8" stroke="#111" stroke-width="1.500"/></svg>
    <svg class="w-6 h-6 ml-[17px]" viewBox="0 0 24 24"><path d="M1 8l6-3c2 3 5 3 7 0l6 3-2 5h-3v9H6v-9H3z" fill="#a76bf0"/><path d="M1 8l6-3 2 8H3z" fill="#f76b58"/><path d="M6 16h9v6H6z" fill="#57c8f5"/><circle cx="20" cy="4" r="4" fill="#ff5030"/></svg>
    <svg class="w-5 h-5 ml-[15px]" viewBox="0 0 20 20"><path d="M1 1h6.500v7H1zM1 12h6.500v7H1zM12 12h7v7h-7z" fill="none" stroke="#111" stroke-width="1.800"/><circle cx="15.500" cy="4.500" r="3.500" fill="none" stroke="#111" stroke-width="1.800"/></svg>
    <svg class="w-7 h-6 ml-4" viewBox="0 0 28 24"><circle cx="13" cy="12" r="11" fill="#fdf5f0" stroke="#f0e0dc"/><path d="M1 8l17-1v6c-3 2-5 1-7-1-2 3-7 3-9 0z" fill="#e8621f"/><path d="M4 9h3v3H4zM11 9h4v3h-4zM11 18c2 0 4-1 4-3" fill="#222"/><path d="M23 5l1.500 4L28 10l-3.500 1.500L23 15l-1.500-3.500L19 10l2.500-1z" fill="#ffd93a"/></svg>
  </div>
  <div class="absolute right-0 top-5 w-2.5 h-12 rounded-bl-lg bg-[#1fb0f8]"></div>

  <!-- Floating network monitor -->
  <aside class="absolute right-0 top-[527px] w-[41px] h-[270px] rounded-l-lg bg-[#5a5f68]/55 flex flex-col items-center text-[12px] text-white leading-[14px]">
    <span class="mt-4 w-4 h-[18px] rounded bg-[#ff8b3d] text-center font-bold leading-[18px]">2</span>
    <svg class="w-3 h-5 mt-[38px]" viewBox="0 0 12 20"><path d="M0 0h12v14c0 8-12 8-12-4z" fill="#4fbf7b"/><path d="M0 0h12v5L0 8z" fill="#c9b82c"/></svg>
    <span class="mt-5">0.4</span>
    <span class="text-[#c8c8c8] text-[11px]"><b class="text-[#1ea0ff]">↑</b> K/s</span>
    <span class="mt-[5px]">0.4</span>
    <span class="text-[#c8c8c8] text-[11px]"><b class="text-[#18c070]">↓</b> K/s</span>
    <svg class="w-5 h-5 mt-5" viewBox="0 0 20 20"><path d="M4 0v15h15M0 4h15v15" fill="none" stroke="#fff" stroke-width="1.800"/><path d="M6 13l7-6v6z" fill="#fff"/></svg>
    <svg class="w-5 h-2.5 mt-0.5" viewBox="0 0 20 8"><path d="M4 0v8L0 4zM16 0v8l4-4z" fill="#777"/></svg>
    <svg class="w-[18px] h-[18px] mt-2.5" viewBox="0 0 18 18"><rect width="18" height="18" rx="2" fill="#e4e4e4"/><circle cx="8" cy="8" r="3.500" fill="none" stroke="#999" stroke-width="1.800"/><path d="M11 11l4 4" stroke="#999" stroke-width="1.800"/></svg>
  </aside>

  <!-- Watermark -->
  <svg class="absolute inset-0 w-full h-full pointer-events-none" aria-hidden="true">
    <pattern id="mark" width="250" height="250" patternUnits="userSpaceOnUse">
      <text x="125" y="137" text-anchor="middle" transform="rotate(-35 125 124)" class="text-[36px] font-bold font-['Liberation_Sans',sans-serif]" fill="#ffffff" fill-opacity=".11" stroke="#606060" stroke-opacity=".3">EAHub.cn</text>
    </pattern>
    <rect width="100%" height="1000" fill="url(#mark)"/>
  </svg>

  <script>
    const el = id => document.getElementById(id);

    el('menu').innerHTML = ['文件(F)', '显示(V)', '插入(I)', '图表(C)', '工具(T)', '窗口(W)', '帮助(H)']
      .map(m => `<button class="min-w-[49px] text-left">${m}</button>`).join('');

    // ---- toolbars ----
    const plain = 'w-[34px] h-[29px] flex items-center justify-center shrink-0';
    const pressed = 'w-[31px] mr-[3px] h-[29px] flex items-center justify-center shrink-0 bg-[#f8f8f8] border-l border-t border-[#a0a0a0]';
    const grip = '<span class="w-[3px] h-[27px] mx-0.5 border-l-2 border-dotted border-[#999]"></span>';
    const sep = '<span class="w-px h-[28px] mx-[3px] bg-[#a0a0a0]"></span>';
    const thinSep = '<span class="w-px h-[28px] mx-0.5 bg-[#a0a0a0]"></span>';
    const tool = (id, label, on) => `<button class="${on ? pressed : plain}" aria-label="${label}"><svg class="w-[22px] h-[22px]"><use href="#${id}"/></svg></button>`;
    const menuTool = (id, label) => `<button class="w-[46px] h-[29px] flex items-center gap-1 pl-1 shrink-0" aria-label="${label}"><svg class="w-[22px] h-[22px]"><use href="#${id}"/></svg><svg class="w-2 h-[5px]"><use href="#caret"/></svg></button>`;

    el('toolbar1').innerHTML = grip + menuTool('i-newchart', '新图表') + menuTool('i-profiles', '配置') + sep
      + tool('i-market', '市场报价', 1) + tool('i-target', '数据窗口') + tool('i-nav', '导航', 1) + tool('i-terminal', '终端', 1) + tool('i-tester', '测试') + sep
      + '<button class="w-[80px] ml-0.5 h-[29px] flex items-center gap-0.5 pl-1 text-[15px] whitespace-nowrap"><svg class="w-[22px] h-[22px] shrink-0"><use href="#i-order"/></svg>新订单</button>'
      + tool('i-editor', 'MetaEditor') + tool('i-cloud', '云') + tool('i-signal', '信号')
      + '<button class="w-[96px] h-[29px] mr-1 flex items-center gap-1 pl-1 bg-[#f8f8f8] border-l border-t border-[#a0a0a0] text-[15px] whitespace-nowrap"><svg class="w-[22px] h-[22px] shrink-0"><use href="#i-auto"/></svg>自动交易</button>'
      + grip + tool('i-bars', '柱形图') + tool('i-candle', '蜡烛图', 1) + tool('i-line', '线图') + thinSep
      + tool('i-zoomin', '放大') + tool('i-zoomout', '缩小') + tool('i-tile', '平铺') + sep
      + tool('i-scroll', '自动滚动', 1) + tool('i-shift', '图表平移', 1) + sep
      + menuTool('i-indicator', '指标') + menuTool('i-clock', '周期') + menuTool('i-template', '模板');

    const letter = (id, t, label) => `<button class="relative ${plain}" aria-label="${label}"><svg class="w-[22px] h-[22px]"><use href="#${id}"/></svg><span class="absolute right-0.5 bottom-0 text-[10px] font-bold leading-3 text-[#444]">${t}</span></button>`;
    const period = (t, on) => `<button class="${on ? pressed : plain} text-[12px] text-[#555]">${t}</button>`;
    el('toolbar2').innerHTML = grip + tool('i-cursor', '光标', 1) + tool('i-cross', '十字线') + thinSep
      + tool('i-vline', '垂直线') + tool('i-hline', '水平线') + tool('i-trend', '趋势线') + letter('i-channel', 'E', '通道') + letter('i-fibo', 'F', '斐波那契')
      + `<button class="${plain} font-bold text-[#555]">A</button>` + tool('i-label', '标签') + menuTool('i-arrows', '箭头')
      + '<span class="w-px h-[28px] mr-0.5 bg-[#a0a0a0]"></span>' + grip
      + period('M1') + period('M5') + period('M15') + period('M30', 1) + period('H1') + sep
      + period('H4') + period('D1') + period('W1') + period('MN');

    // ---- navigator tree ----
    let tree = '<path d="M14.500 2V235M14.500 242V600M40.500 2V216M40.500 248V600" stroke="#666" stroke-dasharray="1 2"/>';
    for (let i = 0; i < 10; i++) {
      const y = 12 + i * 22;
      tree += `<path d="M42 ${y + 1.5}H56" stroke="#666" stroke-dasharray="1 2"/><path d="M60 ${y - 8}h-1l-2 2v12l2 2h1" fill="#f7d95f" stroke="#b98a13"/>`;
    }
    tree += '<rect x="9.500" y="228.500" width="10" height="10" fill="#fff" stroke="#888"/><path d="M11 233.500h7" stroke="#2a50c0"/><path d="M21 233.500h8" stroke="#666" stroke-dasharray="1 2"/><path d="M32 231c2 7 6 8 11 7l4-6z" fill="#f5c542" stroke="#b98a13"/><ellipse cx="40" cy="230" rx="10" ry="3.500" fill="#5aa9dc" stroke="#2e7bb0"/><path d="M35 229c0-6 9-6 9 0z" fill="#7cc1ea"/><path d="M44 236l4-3 4 4-4 3z" fill="#f5c542" stroke="#b98a13"/><text x="58" y="238" font-size="14">E</text>';
    for (let i = 0; i < 16; i++) {
      const y = 251 + i * 22;
      tree += `<path d="M42 ${y + 3.5}H56" stroke="#666" stroke-dasharray="1 2"/><path d="M60 ${y - 3}a3 3 0 000 6z" fill="#3e9fd8" stroke="#2878a8"/>`;
    }
    el('navTree').innerHTML = tree;

    // ---- market watch ----
    const falling = [0, 1, 12, 13, 14, 21];
    el('quotes').innerHTML = Array.from({ length: 22 }, (_, i) => {
      const down = falling.includes(i);
      const sel = i === 6;
      const dot = sel ? 'text-white' : down ? 'text-red-600' : 'text-blue-600';
      const cell = `p-0 border-l border-[#c0c0c0] text-center ${dot}`;
      return `<tr class="h-[25px] border-y border-[#c0c0c0] ${sel ? 'bg-[#0078d7]' : 'bg-[#f0fff0]'}">
        <td class="p-0"><svg class="w-3.5 h-3 mx-auto"><use href="#${down ? 'i-down' : 'i-up'}"/></svg></td>
        <td class="${cell}">.</td><td class="${cell}">.</td><td class="border-l border-[#c0c0c0]"></td></tr>`;
    }).join('');

    // ---- magic number table ----
    const magic = [
      ['30002', 344, '37.76', '0.01', '0.50', '-2.25', '4539.46', '-13579.20'],
      ['2006001', 33, '1.98', '0.06', '0.06', '0.00', '755.06', '-271.40'],
      ['2201211', 5, '0.15', '0.03', '0.03', '0.00', '330.32', '-113.60'],
      ['5825889', 59, '2.78', '0.02', '0.07', '0.00', '287.93', '-347.10'],
      ['2201223', 2, '0.24', '0.12', '0.12', '0.00', '110.88', '0.00'],
      ['8888810', 11, '0.88', '0.08', '0.08', '0.00', '108.32', '-2.40'],
      ['2005203', 1, '0.70', '0.70', '0.70', '0.00', '105.00', '0.00'],
      ['20140643', 657, '738.86', '0.01', '5.00', '0.00', '91.50', '-14115.30'],
      ['220120', 7, '0.49', '0.07', '0.07', '0.00', '78.68', '-52.10'],
      ['220998', 9, '0.27', '0.03', '0.03', '0.00', '65.84', '-32.70'],
      ['19828668', 18, '0.18', '0.01', '0.01', '0.00', '24.26', '-14.20'],
      ['2005206', 1, '0.01', '0.01', '0.01', '0.00', '0.32', '0.00'],
      ['', 0, '0.00', '0.00', '0.00', '0.00', '0.00', '0.00'],
      ['2201212', 2, '0.14', '0.07', '0.07', '0.00', '-10.01', '-22.40'],
      ['2006022', 39, '0.89', '0.01', '0.06', '0.00', '-30.34', '-81.30'],
      ['8888804', 28, '29.00', '0.50', '1.50', '0.00', '-42.50', '-307.50'],
      ['2201225', 11, '0.33', '0.03', '0.03', '0.00', '-46.62', '-63.10'],
      ['8888805', 16, '1.92', '0.12', '0.12', '0.00', '-96.71', '-247.20'],
      ['777', 2, '1.50', '0.50', '1.00', '0.00', '-103.00', '-103.00'],
      ['244021', 23, '0.58', '0.01', '0.06', '0.00', '-112.26', '-253.90'],
      ['8888806', 20, '24.00', '0.50', '1.50', '0.00', '-144.50', '-354.00'],
      ['2005201', 3, '1.41', '0.01', '0.70', '0.00', '-154.82', '-154.82'],
      ['2006003', 31, '1.86', '0.06', '0.06', '0.00', '-157.93', '-206.40'],
      ['888808', 35, '43.50', '0.50', '1.50', '0.00', '-163.00', '-779.50'],
      ['88888807', 16, '0.32', '0.02', '0.02', '0.00', '-207.84', '-203.10']
    ];
    const tone = v => parseFloat(v) === 0 ? 'text-[#708090]' : parseFloat(v) < 0 ? 'text-[#00ff00]' : 'text-[#ff0000]';
    el('magic').innerHTML = magic.map((r, i) => {
      const [id, n, sum, min, max, swap, profit, loss] = r;
      return `<tr class="h-[15px] ${i % 2 ? 'bg-[#141414]' : 'outline outline-[#161616] -outline-offset-1'} ${tone(profit)}">
        <td class="p-0 text-left">${id}</td><td class="p-0">${n}</td><td class="p-0">${sum}</td><td class="p-0">${min}</td><td class="p-0">${max}</td>
        <td class="p-0 ${tone(swap)}">${swap}</td><td class="p-0 text-[#708090]">0.00</td><td class="p-0">${profit}</td><td class="p-0 ${tone(loss)}">${loss}</td></tr>`;
    }).join('');

    // ---- USDCHF axes ----
    const usd = [[17, '0.79870'], [72, '0.79835'], [128, '0.79800'], [183, '0.79765'], [238, '0.79730'], [293, '0.79695'], [404, '0.79625'], [459, '0.79590'], [514, '0.79555']];
    el('usdPrices').innerHTML = usd.map(([y, t]) => `<path d="M0 ${y}.500h4" stroke="#fff"/><text x="6" y="${y + 5}" fill="#fff">${t}</text>`).join('')
      + '<rect x="1" y="330" width="56" height="14" fill="#1e90ff"/><text x="6" y="342" fill="#222">0.79667</text><rect x="1" y="344" width="56" height="14" fill="#fff"/><text x="6" y="356" fill="#222">0.79658</text>';
    el('usdTimes').innerHTML = ['12 Sep 2025', '12 Sep 06:30', '12 Sep 09:30', '12 Sep 12:30', '12 Sep 15:30', '12 Sep 18:30']
      .map((t, i) => `<path d="M${i * 96 + 1.5} 0v3" stroke="#fff"/><text x="${i * 96}" y="15" fill="#fff">${t}</text>`).join('');

    // ---- AUS200 chart ----
    // Bars are two pixels apart, each a high/low pair in thirds of a pixel below the segment's top.
    const segments = [
      { x: 1020, top: 125, bars: '850 900,660 895,690 780,755 860,705 800,750 850,760 830,780 870,790 880,715 770,685 760,710 760,720 790,740 895,755 860,770 850,725 780,740 790,735 770,680 760,700 770,715 740,575 790,590 655,500 620,420 530,395 480,400 500,440 490,440 500,395 490,400 490,400 500,460 570,480 575,470 575,460 555,400 480,405 480,420 470,420 500,410 450,405 460,400 440,400 430,375 420' },
      { x: 1216, top: 125, bars: '855 880' },
      { x: 1388, top: 125, bars: '855 880,855 880,855 870' },
      { x: 1424, top: 420, bars: '-15 45,-5 70,-25 75,-30 20,-30 35,-30 25,-30 25,-30 65,-10 45,20 215,125 205,125 185,185 260,235 310,290 443,222 400,210 350,318 420,315 400,290 370,255 320,170 280,165 220,215 300,175 305,165 270,255 430,390 510,490 610,590 690,665 760,700 800,590 710,570 620,540 610,525 570,518 590,540 655,505 635,490 560,505 560,520 570,545 658,605 658,535 655,540 600,660 690,582 710,390 590,390 500,360 440,400 510,345 420,300 370,320 400,330 385,340 380,320 355,280 350,285 330,270 370,280 380,255 340,230 300,205 240,190 225,150 210,125 175,150 185,140 195,115 180,98 215,140 240,160 220,185 245,110 205,140 205,135 210,200 265,230 250,200 235,200 225,190 235,130 270,180 310,230 415,300 425,275 320,290 360,255 345,240 300,105 345,145 240,205 320,225 325,250 360,240 320,270 310,235 280,195 250,170 245,205 270,230 280,240 270,225 260,235 310,245 375,250 400,265 370,340 400,345 415,320 400,310 350,310 350,330 360,305 350,320 460,390 540,430 525,470 540,480 540,460 563,430 520,400 470,450 490,430 480,425 480,420 465,430 480,405 475,430 500,440 460,385 490,385 440,430 465,420 465,435 450,450 490,440 530,390 515,370 430,335 380,330 400,320 370,298 350,310 370,310 400,310 420,320 390,330 380,335 360,255 380,300 400,360 460,390 460,400 460,395 440,400 450,400 460,405 470,385 450,395 500,390 490,480 510,470 520,450 557,460 510,435 500,440 510,455 495,430 480,405 450,420 440,355 460,220 440,235 310,240 300,230 260,220 250,215 240,210 245,240 280,275 310,240 310,80 300,105 200,115 190,145 200,150 195,125 200,165 230,180 280,275 330,290 325,285 340,265 330,280 320,245 330,260 350,340 400,380 400,360 385,325 380,340 415' }
    ];
    const candles = segments.map(s => s.bars.split(',').map((b, i) => {
      const [hi, lo] = b.split(' ').map(Number);
      return `M${s.x + i * 2 + .5} ${s.top + Math.round(hi / 3)}V${s.top + Math.round(lo / 3)}`;
    }).join('')).join('');
    let grid = '';
    for (let x = 1064; x < 1838; x += 48) grid += `M${x + .5} 168V699`;
    for (let y = 190; y < 699; y += 49) grid += `M1015 ${y + .5}H1838`;
    const prices = ['9061.90', '9028.75', '8995.60', '8961.80', '8928.65', '8895.50', '8862.35', '8828.55', '8795.40', '8762.25', '8728.45'];
    const days = ['19 Aug 2025', '22 Aug 00:00', '26 Aug 03:00', '28 Aug 05:00', '1 Sep 08:10', '3 Sep 11:10', '5 Sep 13:10', '9 Sep 16:10', '11 Sep 18:10'];
    el('ausChart').innerHTML = `
      <path d="${grid}" stroke="#778899" stroke-dasharray="5 4" fill="none"/>
      <path d="M1015 553.500H1838" stroke="#778899"/>
      <path d="${candles}" stroke="#00ff00" fill="none"/>
      <path d="M1015 167.500H1838.500V699.500H1015" stroke="#fff" fill="none"/>
      <path d="M1019 175h9l-4.500 5z" fill="#fff"/><text x="1034" y="182" fill="#fff">AUS200,H1</text>`
      + prices.map((p, i) => `<path d="M1839 ${190.5 + i * 49}h3" stroke="#fff"/><text x="1845" y="${195 + i * 49}" fill="#fff">${p}</text>`).join('')
      + '<rect x="1840" y="546" width="56" height="14" fill="#fff"/><text x="1845" y="558" fill="#000">8814.84</text>'
      + days.map((d, i) => `<path d="M${1016.5 + i * 96} 700v3" stroke="#fff"/><text x="${1015 + i * 96}" y="715" fill="#fff">${d}</text>`).join('');

    // ---- comment statistics ----
    const stats = [
      ['无备注', '782.04', '0.01 | 5.00', '1087', '3675.51', '0:00:02 | 3:01:31 | 110:09:00', '76.72 %', '0.'],
      ['稳努手者Kings', '5.51', '0.01 | 0.06', '126', '454.55', '0:00:25 | 4:06:55 | 50:16:45', '56.10 %', '1.'],
      ['作者微信563664524', '2.78', '0.02 | 0.07', '59', '287.93', '0:04:50 | 2:06:07 | 50:48:47', '35.59 %', '2.'],
      ['[EAHub]FT-NeoScalper', '12.50', '0.50 | 1.00', '33', '251.00', '0:02:56 | 0:57:05 | 4:04:47', '69.64 %', '1.'],
      ['Aberration', '3.19', '0.05 | 0.12', '52', '202.75', '0:08:28 | 33:32:10 | 134:00:00', '38.46 %', '1.'],
      ['稳定压倒一切', '0.18', '0.01 | 0.01', '18', '24.26', '0:15:00 | 0:38:16 | 1:46:02', '83.33 %', '0.'],
      ['King', '4.00', '0.50 | 1.00', '6', '15.00', '0:13:40 | 1:04:14 | 2:00:00', '66.67 %', '0.'],
      ['ShocksMor', '2.12', '0.01 | 0.70', '5', '-49.50', '2:58:13 | 4:53:17 | 7:32:56', '40.00 %', '0.'],
      ['Golduxe', '1.50', '0.50 | 1.00', '2', '-103.00', '0:00:02 | 0:00:04 | 0:00:06', '-100.00 %', '0.'],
      ['[EAHub]SuperTrend', '6.68', '0.02 | 0.12', '75', '-136.77', '0:18:22 | 10:59:04 | 63:59:32', '56.00 %', '0.'],
      ['kinme5677', '19.38', '0.01 | 0.16', '276', '-1046.00', '0:00:01 | 5:29:17 | 68:30:01', '65.58 %', '0.'],
      ['程星星FRA微信：CX5520055', '100.00', '0.50 | 1.50', '73', '-1354.46', '0:05:33 | 1:13:01 | 3:42:58', '56.16 %', '0.']
    ];
    const bigHan = s => s.replace(/[\u4e00-\u9fff：]+/g, m => `<span class="text-[15px] leading-[12px]">${m}</span>`);
    el('stats').innerHTML = stats.map((r, i) => {
      const c = i < 7 ? 'text-[#f01818]' : 'text-[#00f080]';
      return `<tr class="h-[14px] ${i === 2 ? 'bg-[#343f4c] outline outline-[#9fc8d8] -outline-offset-1' : ''}"><td class="p-0 pl-1.5 ${c}">${i + 1}</td><td class="p-0">${bigHan(r[0])}</td>
        ${r.slice(1, 5).map(v => `<td class="p-0 ${c}">${v}</td>`).join('')}${r.slice(5).map(v => `<td class="p-0">${v}</td>`).join('')}</tr>`;
    }).join('');

    // ---- account history ----
    const history = [
      ['414849048', '2025.04.11 09:48:54', 'D-CNEXLINK-USD-299668295684', '2 009.76'],
      ['414950762', '2025.04.12 05:35:37', 'D-INTARB-USD-INT-2112771755', '0.05'],
      ['415036100', '2025.04.14 04:45:24', 'D-INTARB-USD-INT-2113149627', '0.02'],
      ['415203136', '2025.04.15 05:25:15', 'D-INTARB-USD-INT-2113651605', '0.12'],
      ['415383165', '2025.04.16 05:15:15', 'D-INTARB-USD-INT-2114137845', '0.69'],
      ['415586434', '2025.04.17 04:54:08', 'D-INTARB-USD-INT-2114676049', '0.64'],
      ['415754774', '2025.04.18 05:46:03', 'D-INTARB-USD-INT-2115168093', '0.38']
    ];
    el('history').innerHTML = history.map(([id, time, note, sum], i) => {
      const bg = i === 2 ? 'bg-[#0078d7] text-white' : i % 2 ? 'bg-[#ebebeb]' : 'bg-white';
      return `<tr class="h-[25px] border-b border-[#d0d0d0] ${bg}">
        <td class="border-r border-[#c8c8c8] py-0 pl-1"><span class="flex items-center gap-2"><svg class="w-[15px] h-[17px]" viewBox="0 0 15 17"><rect x=".5" y=".5" width="14" height="16" rx="2" fill="#fff" stroke="#666"/><path d="M7.500 3L12 8H9.500v6h-4V8H3z" fill="#1fae2c" stroke="#0a6b16" stroke-width=".7"/></svg>${id}</span></td>
        <td class="border-r border-[#c8c8c8] py-0 pr-[3px]">${time}</td><td class="border-r border-[#c8c8c8] py-0 pr-[3px]">balance</td>
        <td class="border-r border-[#c8c8c8] py-0 pr-[3px]" colspan="8">${note}</td><td class="py-0 pr-[3px]">${sum}</td></tr>`;
    }).join('');

    el('termTabs').innerHTML = [['交易'], ['展示'], ['账户历史'], ['新闻'], ['警报'], ['邮箱', 247], ['公司'], ['市场', 136], ['信号'], ['文章'], ['代码库'], ['EA'], ['日志']]
      .map(([t, n], i) => i === 2
        ? `<button class="h-[24px] px-[10px] -mt-0.5 bg-white border-x-2 border-b-2 border-black text-black">${t}</button>`
        : `<span class="h-[22px] flex items-center"><button class="px-3 whitespace-nowrap">${t}${n ? `<span class="text-[12px] font-bold text-[#e8141c] align-sub"> ${n}</span>` : ''}</button><i class="h-[17px] border-l ${i === 1 ? 'border-transparent' : 'border-[#808080]'}"></i></span>`).join('');
  </script>
</body>
</html>
